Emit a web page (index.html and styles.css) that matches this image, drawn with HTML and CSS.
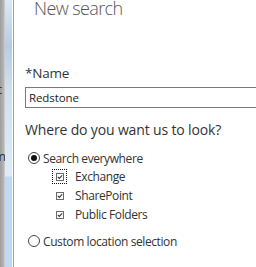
FILE: index.html
```html
<!DOCTYPE html>
<html lang="en">
<head>
    <meta charset="UTF-8">
    <meta name="viewport" content="width=device-width, initial-scale=1.0">
    <title>New search</title>
    <link rel="stylesheet" href="styles.css">
</head>
<body>
    <div class="window">
        <div class="backdrop">
            <span class="ghost g1">(</span>
            <span class="ghost g2">c</span>
            <span class="ghost g3">m</span>
        </div>
        <div class="scroll-strip"></div>

        <div class="dialog">
            <h1 class="title">New search</h1>

            <label class="field-label" for="searchName">*Name</label>
            <input type="text" id="searchName" class="name-input" value="Redstone">

            <p class="question">Where do you want us to look?</p>

            <div class="option">
                <span class="radio checked"></span>
                <span class="option-text">Search everywhere</span>
            </div>

            <ul class="sources">
                <li class="source">
                    <span class="focus-ring">
                        <span class="check">
                            <svg viewBox="0 0 6 6"><path d="M0.8 2.9 L2.3 4.4 L5.2 1.4" fill="none" stroke="#333333" stroke-width="1.1"/></svg>
                        </span>
                    </span>
                    <span class="source-text">Exchange</span>
                </li>
                <li class="source">
                    <span class="focus-ring plain">
                        <span class="check">
                            <svg viewBox="0 0 6 6"><path d="M0.8 2.9 L2.3 4.4 L5.2 1.4" fill="none" stroke="#333333" stroke-width="1.1"/></svg>
                        </span>
                    </span>
                    <span class="source-text">SharePoint</span>
                </li>
                <li class="source">
                    <span class="focus-ring plain">
                        <span class="check">
                            <svg viewBox="0 0 6 6"><path d="M0.8 2.9 L2.3 4.4 L5.2 1.4" fill="none" stroke="#333333" stroke-width="1.1"/></svg>
                        </span>
                    </span>
                    <span class="source-text">Public Folders</span>
                </li>
            </ul>

            <div class="option custom">
                <span class="radio"></span>
                <span class="option-text">Custom location selection</span>
            </div>
        </div>
    </div>
</body>
</html>
```

FILE: styles.css
```css
* {
    margin: 0;
    padding: 0;
    box-sizing: border-box;
}

html, body {
    width: 256px;
    height: 267px;
    overflow: hidden;
    background: #ffffff;
}

body {
    font-family: 'Open Sans', 'Noto Sans', sans-serif;
    color: #333333;
}

.window {
    display: flex;
    height: 267px;
}

/* edge of the window behind the dialog */
.backdrop {
    position: relative;
    width: 5px;
    flex-shrink: 0;
    background: linear-gradient(90deg, #9d9d9d 0%, #b4b4b4 70%, #d4d4d4 100%);
    overflow: hidden;
}

.ghost {
    position: absolute;
    left: -4px;
    font-size: 13px;
    line-height: 13px;
    color: #333;
}

.g1 { top: 44px; }
.g2 { top: 83px; }
.g3 { top: 150px; left: -6px; }

.scroll-strip {
    width: 9px;
    flex-shrink: 0;
    background:
        linear-gradient(180deg, #dbe9f7 0px, #b5cde3 45px, #cfe0f0 90px, #dfecf8 176px, #bcd9f5 177px, #bcd9f5 267px);
    border-right: 1px solid #9aa3ad;
    box-shadow: inset -1px 0 0 #ffffff;
}

.dialog {
    flex: 1;
    padding-left: 11px;
    overflow: hidden;
}

.title {
    font-weight: 300;
    font-size: 18px;
    line-height: 18px;
    letter-spacing: -0.6px;
    color: #555555;
    margin-left: 9px;
    margin-top: -1px;
    white-space: nowrap;
}

.field-label {
    display: block;
    font-size: 13.5px;
    line-height: 18px;
    letter-spacing: -0.2px;
    margin-top: 47px;
}

.name-input {
    display: block;
    width: 260px;
    height: 21px;
    margin-top: 5px;
    border: 1px solid #7a7a7a;
    padding: 0 3px;
    font-family: 'Open Sans', sans-serif;
    font-size: 11.5px;
    letter-spacing: -0.1px;
    color: #222222;
    outline: none;
}

.question {
    font-size: 14px;
    line-height: 20px;
    letter-spacing: -0.15px;
    margin-top: 12px;
    white-space: nowrap;
}

.option {
    display: flex;
    align-items: center;
    gap: 3px;
    margin-top: 10px;
    margin-left: 3px;
    height: 16px;
}

.option-text {
    font-size: 12px;
    letter-spacing: -0.4px;
    white-space: nowrap;
}

.radio {
    width: 12px;
    height: 12px;
    border: 1px solid #444444;
    border-radius: 50%;
    display: flex;
    align-items: center;
    justify-content: center;
    background: #ffffff;
}

.radio.checked::after {
    content: "";
    width: 6px;
    height: 6px;
    border-radius: 50%;
    background: #111111;
}

.sources {
    list-style: none;
    margin-left: 27px;
    margin-top: 1px;
}

.source {
    display: flex;
    align-items: center;
    height: 19px;
    gap: 8px;
}

.focus-ring {
    width: 15px;
    height: 15px;
    border: 1px dotted #111111;
    display: flex;
    align-items: center;
    justify-content: center;
}

.focus-ring.plain {
    border-color: transparent;
}

.check {
    width: 8px;
    height: 8px;
    border: 1px solid #6a6a6a;
    display: flex;
    align-items: center;
    justify-content: center;
}

.check svg {
    width: 6px;
    height: 6px;
}

.source-text {
    font-size: 12px;
    letter-spacing: -0.4px;
    white-space: nowrap;
}

.custom {
    margin-top: 9px;
}
```
